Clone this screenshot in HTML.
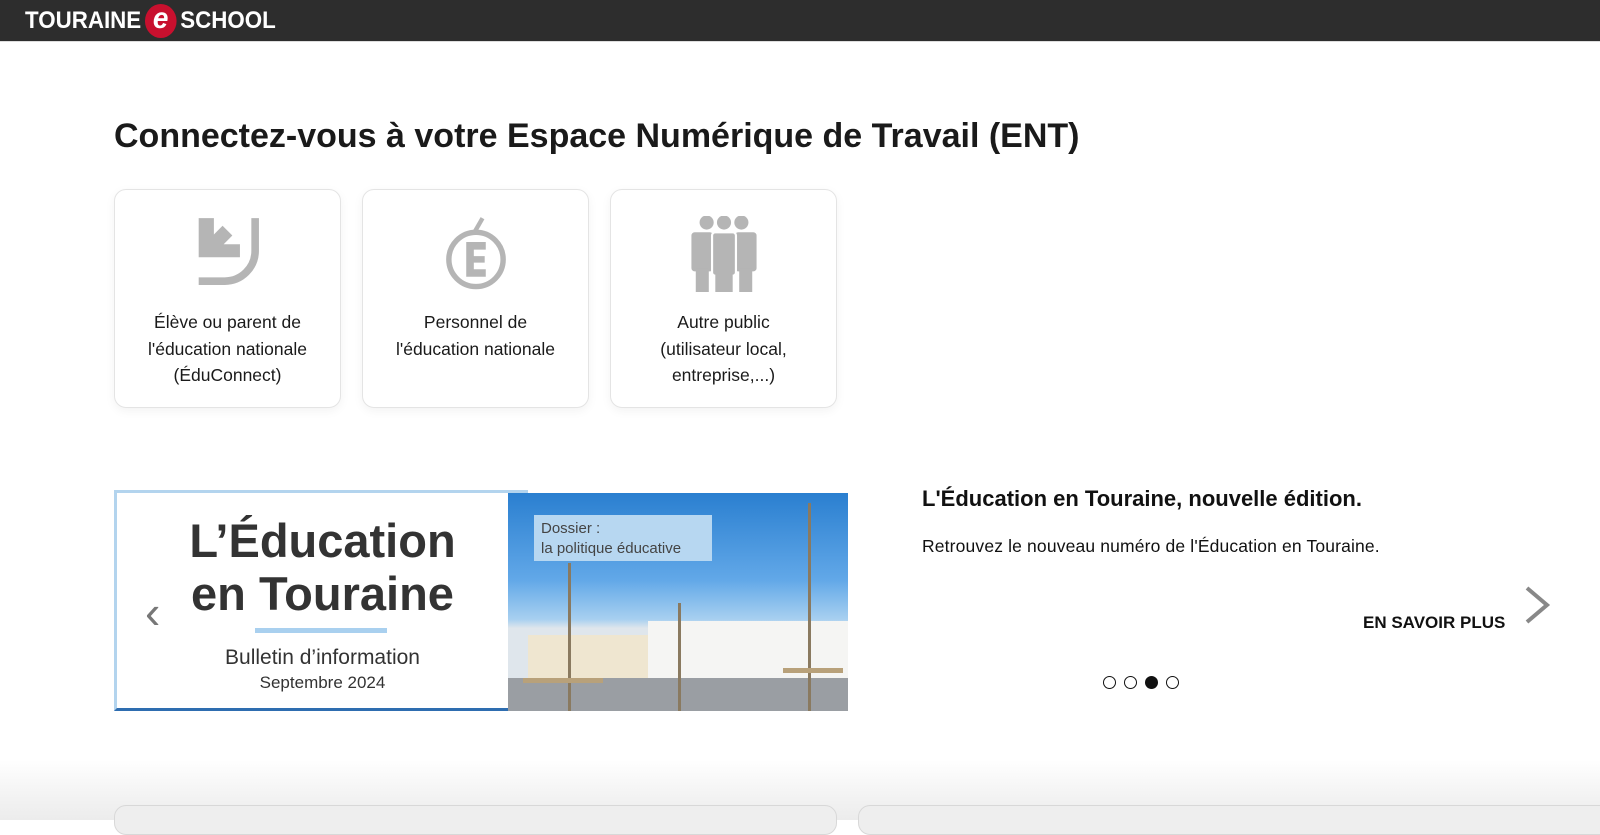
<!DOCTYPE html>
<html><head><meta charset="utf-8"><style>
*{margin:0;padding:0;box-sizing:border-box}
html,body{width:1600px;height:820px;overflow:hidden;background:#fff;font-family:"Liberation Sans",sans-serif;color:#111}
.top{position:absolute;left:0;top:0;width:1600px;height:42px;background:#2d2d2d;border-bottom:1px solid #ddd}
.logo{position:absolute;left:25px;top:4px;color:#fff;font-weight:bold;font-size:24px;transform:scaleX(.93);transform-origin:left;display:flex;align-items:center;white-space:nowrap}
.logo .e{display:inline-block;width:34px;height:34px;border-radius:50%;background:#c8102e;color:#fff;text-align:center;line-height:30px;font-size:30px;font-style:italic;margin:0 4px}
h1{position:absolute;left:114px;top:117px;font-size:34px;font-weight:bold;letter-spacing:0px;color:#1a1a1a}
.card{position:absolute;top:189px;width:227px;height:219px;border:1px solid #e4e4e4;border-radius:12px;background:#fff;box-shadow:0 3px 10px rgba(0,0,0,.05);text-align:center}
.card svg{position:absolute;left:50%;margin-left:-38px;top:26px}
.card p{position:absolute;left:0;right:0;top:119px;font-size:17.5px;line-height:26.5px;color:#1a1a1a}
.slide{position:absolute;left:114px;top:490px;width:734px;height:221px;overflow:hidden}
.left{position:absolute;left:0;top:0;width:414px;height:221px;background:#fff;border:3px solid #b3d4ee;border-right:none;border-bottom-color:#2e6db0}
.left .t{position:absolute;left:0;right:0;text-align:center;color:#333;font-weight:bold}
.right{position:absolute;left:394px;top:3px;width:340px;height:218px;background:linear-gradient(#2a7fd0 0%,#62a8e8 40%,#a8d0f0 58%,#dfe6ec 62%)}
.bld{position:absolute;background:#f2efe8}
.tree{position:absolute;width:3px;background:#8a7a60}
.box{position:absolute;left:26px;top:22px;width:178px;height:46px;background:#b7d7f1;color:#444;font-size:15px;padding:4px 7px;line-height:20px}
.info h2{position:absolute;left:922px;top:486px;font-size:22px;font-weight:bold;color:#111}
.info p{position:absolute;left:922px;top:536px;font-size:17.5px;letter-spacing:0.15px;color:#111}
.more{position:absolute;left:1363px;top:613px;font-size:17px;font-weight:bold;color:#111}
.dot{position:absolute;top:676px;width:13px;height:13px;border:1.5px solid #111;border-radius:50%}
.bottom{position:absolute;left:0;top:760px;width:1600px;height:60px;background:linear-gradient(#fff,#f3f3f3 60%,#ececec)}
.bc{position:absolute;top:805px;height:30px;border:1px solid #d8d8d8;border-radius:12px;background:#eee}
</style></head><body>
<div class="top"><div class="logo">TOURAINE<span class="e">e</span>SCHOOL</div></div>
<h1>Connectez-vous à votre Espace Numérique de Travail (ENT)</h1>

<div class="card" style="left:114px">
<svg width="76" height="76" viewBox="0 0 70 70"><path d="M8 2h14v15l8-8 9 9-8 8h15v12H8z" fill="#b5b5b5"/><path d="M60 2v30a28 28 0 0 1-28 28H8" fill="none" stroke="#b5b5b5" stroke-width="7"/></svg>
<p>Élève ou parent de<br>l'éducation nationale<br>(ÉduConnect)</p></div>
<div class="card" style="left:362px">
<svg width="76" height="76" viewBox="0 0 70 70"><circle cx="35" cy="40" r="25" fill="none" stroke="#b5b5b5" stroke-width="5"/><path d="M26 24h18v7H33v6h10v6H33v6h11v7H26z" fill="#b5b5b5"/><path d="M33 16l8-14" stroke="#b5b5b5" stroke-width="4"/></svg>
<p>Personnel de<br>l'éducation nationale</p></div>
<div class="card" style="left:610px">
<svg width="76" height="76" viewBox="0 0 70 70" fill="#b5b5b5"><circle cx="19" cy="6" r="6.5"/><circle cx="35" cy="6" r="6.5"/><circle cx="51" cy="6" r="6.5"/><rect x="5" y="15" width="20" height="36" rx="3"/><rect x="45" y="15" width="20" height="36" rx="3"/><rect x="9" y="48" width="12" height="22"/><rect x="49" y="48" width="12" height="22"/><rect x="24" y="15" width="22" height="40" rx="3" stroke="#fff" stroke-width="2"/><rect x="27" y="52" width="16" height="18"/></svg>
<p>Autre public<br>(utilisateur local,<br>entreprise,...)</p></div>

<div class="slide">
<div class="left">
<div class="t" style="top:20px;font-size:47px">L’Éducation</div>
<div class="t" style="top:73px;font-size:47px">en Touraine</div>
<div style="position:absolute;left:138px;top:135px;width:132px;height:5px;background:#a9d0ef"></div>
<div class="t" style="top:153px;font-size:21px;font-weight:normal">Bulletin d’information</div>
<div class="t" style="top:180px;font-size:17px;font-weight:normal">Septembre 2024</div>
<div style="position:absolute;left:28px;top:92px;font-size:46px;color:#777">‹</div>
</div>
<div class="right">
<div class="bld" style="left:20px;top:142px;width:120px;height:50px;background:#efe6d0"></div>
<div class="bld" style="left:140px;top:128px;width:200px;height:64px;background:#f5f5f3"></div>
<div style="position:absolute;left:0;top:185px;width:340px;height:33px;background:#9a9ea3"></div>
<div class="tree" style="left:60px;top:70px;height:148px"></div>
<div class="tree" style="left:170px;top:110px;height:108px"></div>
<div class="tree" style="left:300px;top:10px;height:208px"></div>
<div style="position:absolute;left:15px;top:185px;width:80px;height:5px;background:#b8a17a"></div>
<div style="position:absolute;left:275px;top:175px;width:60px;height:5px;background:#b8a17a"></div>
<div class="box">Dossier :<br>la politique éducative</div>
</div>
</div>

<div class="info"><h2>L'Éducation en Touraine, nouvelle édition.</h2>
<p>Retrouvez le nouveau numéro de l'Éducation en Touraine.</p></div>
<div class="more">EN SAVOIR PLUS</div>
<svg style="position:absolute;left:1522px;top:585px" width="30" height="40" viewBox="0 0 30 40"><path d="M5 3l20 17-20 17" fill="none" stroke="#888" stroke-width="4"/></svg>
<div class="dot" style="left:1103px"></div><div class="dot" style="left:1124px"></div><div class="dot" style="left:1145px;background:#111"></div><div class="dot" style="left:1166px"></div>

<div class="bottom"></div>
<div class="bc" style="left:114px;width:723px"></div>
<div class="bc" style="left:858px;width:760px"></div>
</body></html>
